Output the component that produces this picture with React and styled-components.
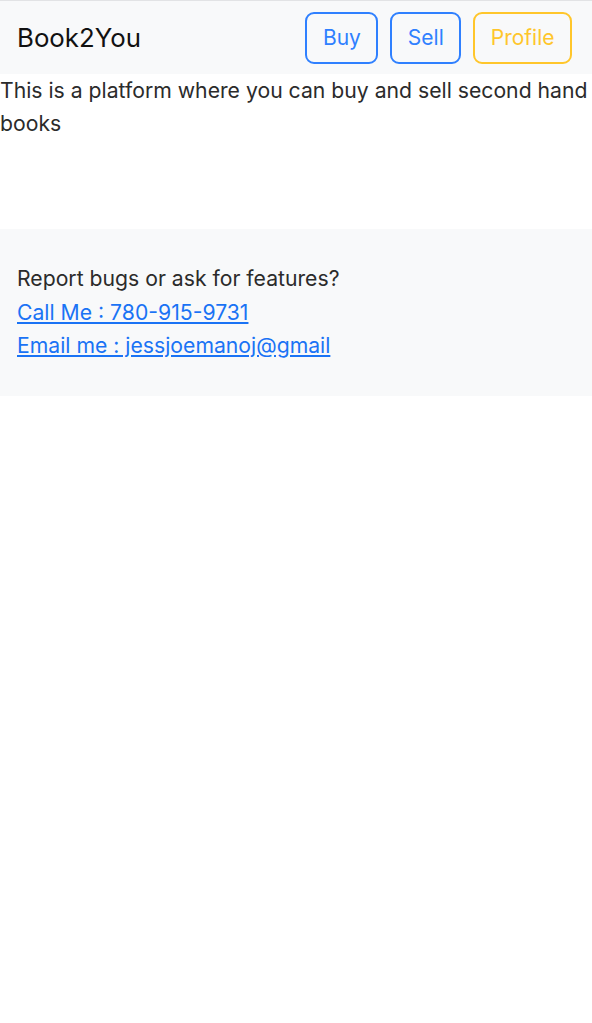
import React from "react";
import styled, { createGlobalStyle } from "styled-components";

const Global = createGlobalStyle`
  html, body { margin: 0; padding: 0; background: #fff; }
  body {
    font-family: Inter, "Liberation Sans", Arial, sans-serif;
    font-size: 21.2px;
    line-height: 1.6;
    color: #212529;
  }
`;

const Nav = styled.nav`
  display: flex;
  align-items: center;
  justify-content: space-between;
  height: 74px;
  box-sizing: border-box;
  padding: 0 20px 0 17px;
  background: #f8f9fa;
  border-top: 1px solid #e2e3e5;
`;

const Brand = styled.div`
  font-size: 25.8px;
  color: #111;
  padding-top: 1px;
`;

const Actions = styled.div`
  display: flex;
  gap: 12px;
`;

const OutlineButton = styled.button`
  font-family: inherit;
  font-size: 21px;
  height: 52px;
  padding: 0 15.5px;
  background: transparent;
  border: 2px solid ${(p) => p.$color};
  color: ${(p) => p.$color};
  border-radius: 9px;
  cursor: pointer;
`;

const Intro = styled.p`
  margin: 0;
  padding: 0;
  line-height: 33px;
  color: #2b2b2b;
`;

const Footer = styled.footer`
  margin-top: 89px;
  background: #f8f9fa;
  padding: 33px 17px 33px;
  display: flex;
  flex-direction: column;
  line-height: 33.5px;
`;

const FooterText = styled.div`
  color: #2b2b2b;
`;

const FooterLink = styled.a`
  color: #1a73f5;
  text-decoration: underline;
  align-self: flex-start;
`;

export default function App() {
  return (
    <>
      <Global />
      <Nav>
        <Brand>Book2You</Brand>
        <Actions>
          <OutlineButton $color="#2f80ff">Buy</OutlineButton>
          <OutlineButton $color="#2f80ff">Sell</OutlineButton>
          <OutlineButton $color="#ffc62b">Profile</OutlineButton>
        </Actions>
      </Nav>
      <Intro>This is a platform where you can buy and sell second hand books</Intro>
      <Footer>
        <FooterText>Report bugs or ask for features?</FooterText>
        <FooterLink href="#">Call Me : 780-915-9731</FooterLink>
        <FooterLink href="#">Email me : jessjoemanoj@gmail</FooterLink>
      </Footer>
    </>
  );
}
